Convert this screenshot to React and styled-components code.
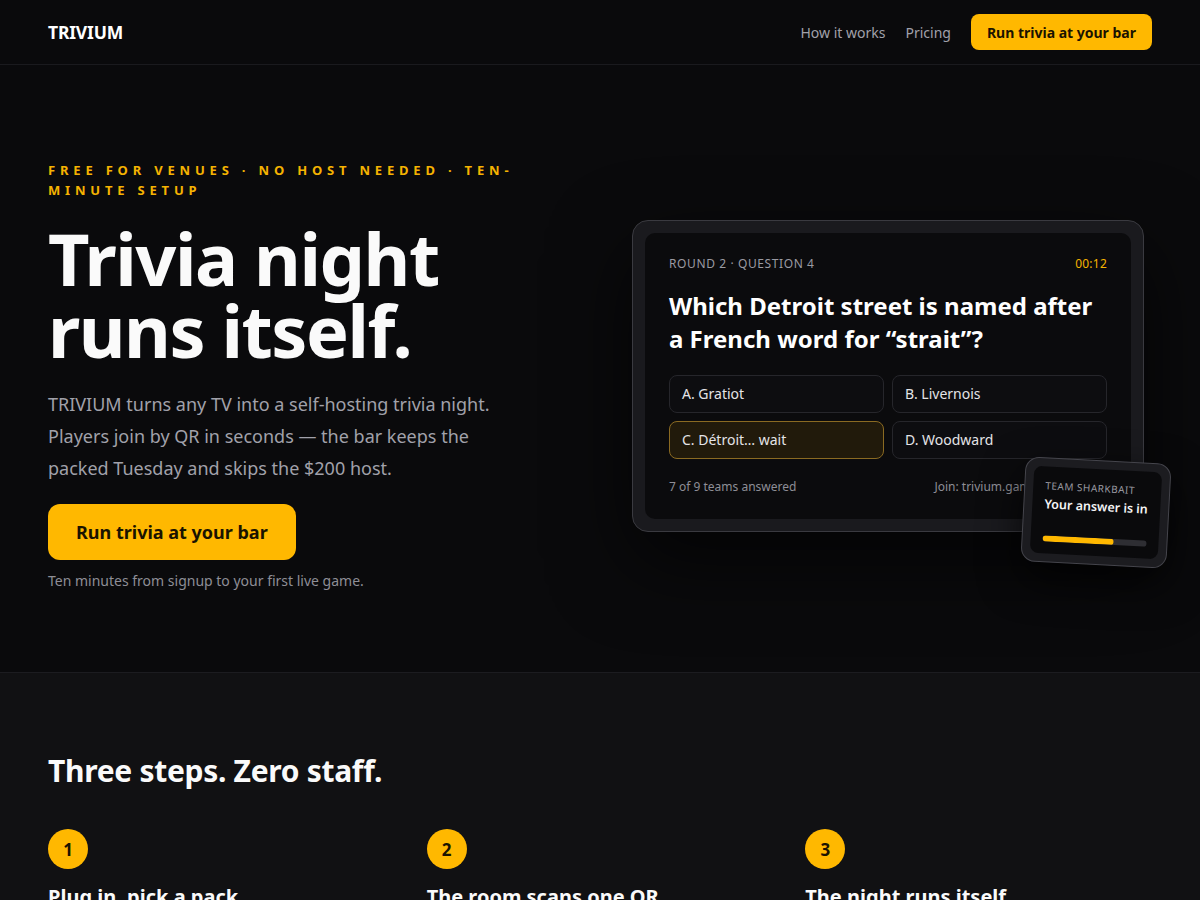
import React from "react";
import styled, { createGlobalStyle } from "styled-components";

const Global = createGlobalStyle`
  * { box-sizing: border-box; }
  html, body { margin: 0; padding: 0; background: #0a0a0c; }
  body { font-family: "Noto Sans", "Open Sans", sans-serif; color: #f4f4f5; -webkit-font-smoothing: antialiased; }
`;

const amber = "#ffb800";

const Nav = styled.header`
  height: 65px;
  border-bottom: 1px solid #1a1a1e;
  background: #0a0a0c;
`;

const Container = styled.div`
  max-width: 1200px;
  margin: 0 auto;
  padding: 0 48px;
`;

const NavInner = styled(Container)`
  height: 64px;
  display: flex;
  align-items: center;
  justify-content: space-between;
`;

const Logo = styled.div`
  font-weight: 700;
  font-size: 17.5px;
  letter-spacing: -0.01em;
  color: #fff;
`;

const NavLinks = styled.nav`
  display: flex;
  align-items: center;
  gap: 20px;
`;

const NavLink = styled.a`
  font-size: 14px;
  color: #a1a1aa;
  text-decoration: none;
`;

const Button = styled.a`
  display: inline-flex;
  align-items: center;
  justify-content: center;
  background: ${amber};
  color: #1a1300;
  font-weight: 700;
  text-decoration: none;
  font-size: ${(p) => (p.$large ? "18px" : "14px")};
  height: ${(p) => (p.$large ? "56px" : "36px")};
  padding: ${(p) => (p.$large ? "0 28px" : "0 16px")};
  border-radius: ${(p) => (p.$large ? "12px" : "8px")};
`;

const Hero = styled.section`
  background: #0a0a0c;
  padding: 95px 0 81px;
`;

const HeroGrid = styled(Container)`
  display: grid;
  grid-template-columns: 1fr 1fr;
  gap: 64px;
  align-items: center;
`;

const Left = styled.div`
  display: flex;
  flex-direction: column;
  align-items: flex-start;
`;

const Eyebrow = styled.div`
  font-size: 13px;
  line-height: 20px;
  font-weight: 700;
  letter-spacing: 0.37em;
  color: #f5b301;
  text-transform: uppercase;
`;

const H1 = styled.h1`
  margin: 22px 0 0;
  font-size: 72px;
  line-height: 72px;
  font-weight: 700;
  letter-spacing: -0.02em;
  color: #fafafa;
`;

const Lead = styled.p`
  margin: 22px 0 0;
  max-width: 460px;
  font-size: 18px;
  line-height: 32px;
  color: #a1a1aa;
`;

const CTAWrap = styled.div`
  margin-top: 20px;
`;

const Sub = styled.p`
  margin: 11px 0 0;
  font-size: 14px;
  line-height: 20px;
  color: #8e8e96;
`;

const Right = styled.div`
  position: relative;
  width: 512px;
`;

const TV = styled.div`
  background: #1a1a1e;
  border: 1px solid #3a3a40;
  border-radius: 16px;
  padding: 12px;
  box-shadow: 0 30px 80px rgba(0, 0, 0, 0.65);
`;

const Screen = styled.div`
  background: #0b0b0d;
  border-radius: 10px;
  padding: 22px 24px 24px;
`;

const ScreenHead = styled.div`
  display: flex;
  justify-content: space-between;
  align-items: center;
  font-size: 12px;
  line-height: 18px;
  letter-spacing: 0.05em;
  color: #9a9aa2;
`;

const Timer = styled.span`
  color: #f5b301;
  letter-spacing: 0.02em;
`;

const Question = styled.h2`
  margin: 16px 0 0;
  font-size: 24px;
  line-height: 33px;
  font-weight: 700;
  color: #fff;
`;

const Options = styled.div`
  margin-top: 20px;
  display: grid;
  grid-template-columns: 1fr 1fr;
  gap: 8px;
`;

const Option = styled.div`
  height: 38px;
  display: flex;
  align-items: center;
  padding: 0 12px;
  font-size: 14px;
  color: #e4e4e7;
  border-radius: 8px;
  border: 1px solid ${(p) => (p.$selected ? "#8a6a22" : "#26262b")};
  background: ${(p) => (p.$selected ? "#211a0b" : "#0d0d10")};
`;

const ScreenFoot = styled.div`
  margin-top: 20px;
  display: flex;
  justify-content: space-between;
  font-size: 12px;
  line-height: 16px;
  color: #8e8e96;
`;

const Phone = styled.div`
  position: absolute;
  right: -25px;
  bottom: -33px;
  width: 146px;
  background: #1c1c20;
  border: 1px solid #45454c;
  border-radius: 14px;
  padding: 8px;
  transform: rotate(3deg);
  box-shadow: 0 16px 40px rgba(0, 0, 0, 0.7);
`;

const PhoneScreen = styled.div`
  background: #0a0a0c;
  border-radius: 8px;
  padding: 12px 12px 12px;
`;

const TeamName = styled.div`
  font-size: 10px;
  line-height: 14px;
  letter-spacing: 0.05em;
  color: #9a9aa2;
  white-space: nowrap;
`;

const PhoneMsg = styled.div`
  margin-top: 3px;
  font-size: 12.5px;
  line-height: 18px;
  font-weight: 600;
  color: #f4f4f5;
  white-space: nowrap;
`;

const Bar = styled.div`
  margin-top: 22px;
  height: 6px;
  border-radius: 3px;
  background: #2e2e33;
  overflow: hidden;
`;

const BarFill = styled.div`
  height: 100%;
  background: ${amber};
  border-radius: 3px;
`;

const Steps = styled.section`
  background: #111113;
  border-top: 1px solid #1c1c20;
  padding: 80px 0 80px;
`;

const H2 = styled.h2`
  margin: 0;
  font-size: 30px;
  line-height: 36px;
  font-weight: 700;
  letter-spacing: -0.01em;
  color: #fafafa;
`;

const StepGrid = styled.div`
  margin-top: 40px;
  display: grid;
  grid-template-columns: repeat(3, 1fr);
  gap: 32px;
`;

const Step = styled.div``;

const StepNum = styled.div`
  width: 40px;
  height: 40px;
  border-radius: 50%;
  background: ${amber};
  color: #1a1300;
  font-weight: 700;
  font-size: 17px;
  display: flex;
  align-items: center;
  justify-content: center;
`;

const StepTitle = styled.h3`
  margin: 14px 0 0;
  font-size: 20px;
  line-height: 28px;
  font-weight: 700;
  color: #fafafa;
`;

const StepText = styled.p`
  margin: 8px 0 0;
  font-size: 15px;
  line-height: 24px;
  color: #a1a1aa;
`;

const steps = [
  ["Plug in, pick a pack", "Connect any TV, choose a themed question pack, and press start."],
  ["The room scans one QR", "Teams join from their phones in seconds. No app, no accounts."],
  ["The night runs itself", "Questions, timers, scoring and the leaderboard all happen on screen."],
];

export default function App() {
  return (
    <>
      <Global />
      <Nav>
        <NavInner>
          <Logo>TRIVIUM</Logo>
          <NavLinks>
            <NavLink href="#">How it works</NavLink>
            <NavLink href="#">Pricing</NavLink>
            <Button href="#">Run trivia at your bar</Button>
          </NavLinks>
        </NavInner>
      </Nav>
      <Hero>
        <HeroGrid>
          <Left>
            <Eyebrow>Free for venues · No host needed · Ten-minute setup</Eyebrow>
            <H1>
              Trivia night
              <br />
              runs itself.
            </H1>
            <Lead>
              TRIVIUM turns any TV into a self-hosting trivia night. Players join by QR in
              seconds — the bar keeps the packed Tuesday and skips the $200 host.
            </Lead>
            <CTAWrap>
              <Button href="#" $large>
                Run trivia at your bar
              </Button>
            </CTAWrap>
            <Sub>Ten minutes from signup to your first live game.</Sub>
          </Left>
          <Right>
            <TV>
              <Screen>
                <ScreenHead>
                  <span>ROUND 2 · QUESTION 4</span>
                  <Timer>00:12</Timer>
                </ScreenHead>
                <Question>Which Detroit street is named after a French word for “strait”?</Question>
                <Options>
                  <Option>A. Gratiot</Option>
                  <Option>B. Livernois</Option>
                  <Option $selected>C. Détroit… wait</Option>
                  <Option>D. Woodward</Option>
                </Options>
                <ScreenFoot>
                  <span>7 of 9 teams answered</span>
                  <span>Join: trivium.game · code 7QX4</span>
                </ScreenFoot>
              </Screen>
            </TV>
            <Phone>
              <PhoneScreen>
                <TeamName>TEAM SHARKBAIT</TeamName>
                <PhoneMsg>Your answer is in</PhoneMsg>
                <Bar>
                  <BarFill style={{ width: "68%" }} />
                </Bar>
              </PhoneScreen>
            </Phone>
          </Right>
        </HeroGrid>
      </Hero>
      <Steps>
        <Container>
          <H2>Three steps. Zero staff.</H2>
          <StepGrid>
            {steps.map(([t, d], i) => (
              <Step key={t}>
                <StepNum>{i + 1}</StepNum>
                <StepTitle>{t}</StepTitle>
                <StepText>{d}</StepText>
              </Step>
            ))}
          </StepGrid>
        </Container>
      </Steps>
    </>
  );
}
